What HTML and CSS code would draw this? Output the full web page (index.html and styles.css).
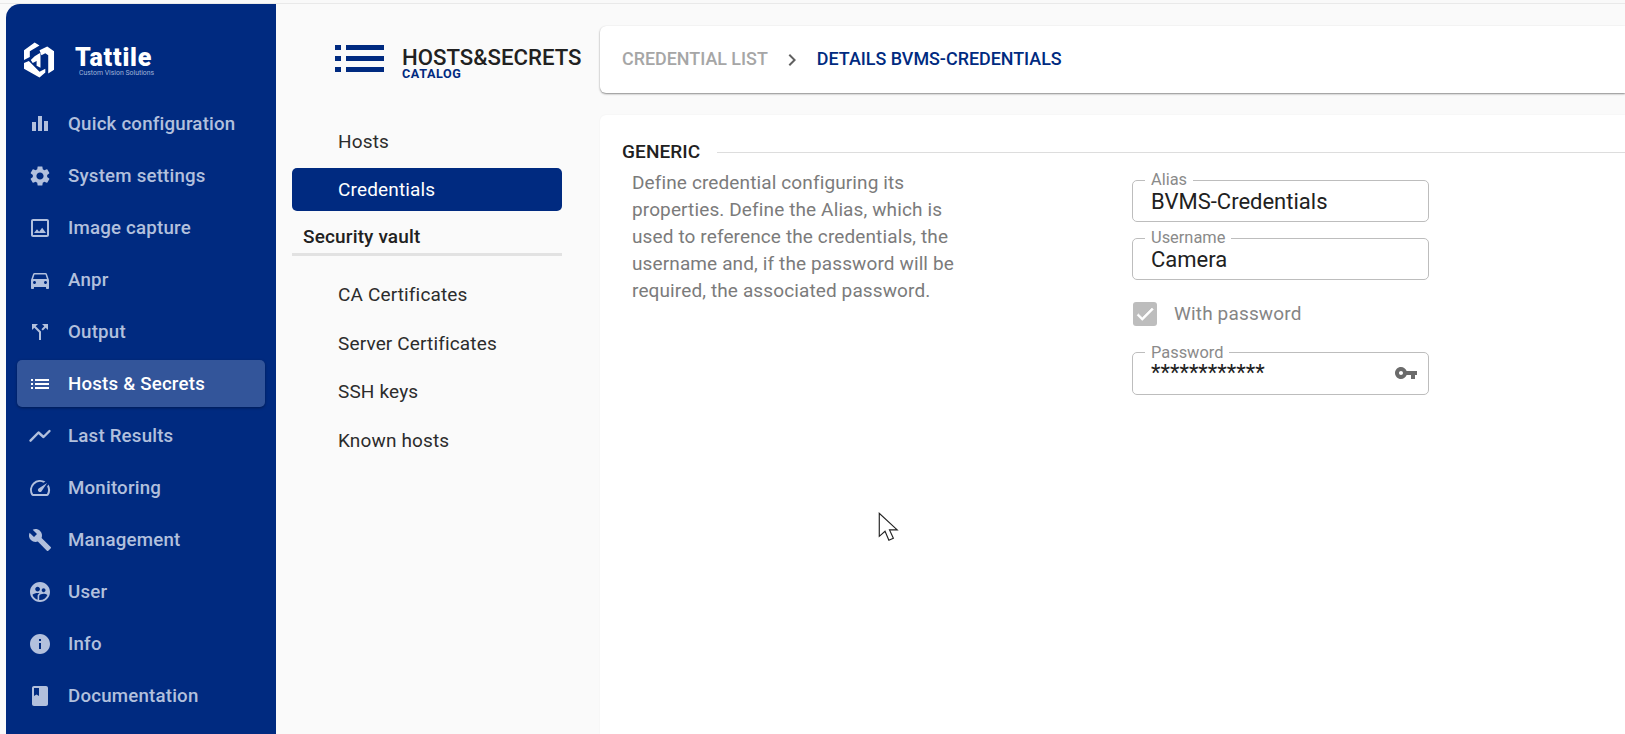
FILE: index.html
```html
<!DOCTYPE html>
<html lang="en">
<head>
<meta charset="utf-8">
<title>Hosts &amp; Secrets</title>
<link rel="stylesheet" href="styles.css">
</head>
<body>
<div class="topstrip"></div>
<div class="app">
  <aside class="sidebar">
    <div class="brand">
      <svg class="brand-mark" viewBox="0 0 32 36"><path d="M11 0 L16 3 L6 9 L6 15 L0 18 L0 8 Z M16 8 L24 4 L31 9 L31 28 L25 32 L25 13 L22 11 L18 13 Z M0 21 L5 19 L16 30 L22 27 L22 31 L16 36 L0 27 Z M11 14 L16 11 L17 11 L17 26 L13 24 L13 19 L9 21 L7 18 Z" fill="#fff"/></svg>
      <div class="brand-text">
        <div class="brand-name">Tattile</div>
        <div class="brand-sub">Custom Vision Solutions</div>
      </div>
    </div>
    <nav class="mainnav">
      <a class="navitem"><svg viewBox="0 0 24 24"><path d="M4 10h4v9H4zM10 4h4v15h-4zM16 9h4v10h-4z"/></svg><span>Quick configuration</span></a>
      <a class="navitem"><svg viewBox="0 0 24 24"><path d="M19.14 12.94c.04-.3.06-.61.06-.94 0-.32-.02-.64-.07-.94l2.03-1.58c.18-.14.23-.41.12-.61l-1.92-3.32c-.12-.22-.37-.29-.59-.22l-2.39.96c-.5-.38-1.03-.7-1.62-.94l-.36-2.54c-.04-.24-.24-.41-.48-.41h-3.84c-.24 0-.43.17-.47.41l-.36 2.54c-.59.24-1.13.57-1.62.94l-2.39-.96c-.22-.08-.47 0-.59.22L2.74 8.87c-.12.21-.08.47.12.61l2.03 1.58c-.05.3-.09.63-.09.94s.02.64.07.94l-2.03 1.58c-.18.14-.23.41-.12.61l1.92 3.32c.12.22.37.29.59.22l2.39-.96c.5.38 1.03.7 1.62.94l.36 2.54c.05.24.24.41.48.41h3.84c.24 0 .44-.17.47-.41l.36-2.54c.59-.24 1.13-.56 1.62-.94l2.39.96c.22.08.47 0 .59-.22l1.92-3.32c.12-.22.07-.47-.12-.61l-2.01-1.58zM12 15.6c-1.98 0-3.6-1.62-3.6-3.6s1.62-3.6 3.6-3.6 3.6 1.62 3.6 3.6-1.62 3.6-3.6 3.6z"/></svg><span>System settings</span></a>
      <a class="navitem"><svg viewBox="0 0 24 24"><path d="M19 5v14H5V5h14m0-2H5c-1.1 0-2 .9-2 2v14c0 1.1.9 2 2 2h14c1.1 0 2-.9 2-2V5c0-1.1-.9-2-2-2zm-4.86 8.86l-3 3.87L9 13.14 6 17h12l-3.86-5.14z"/></svg><span>Image capture</span></a>
      <a class="navitem"><svg viewBox="0 0 24 24"><path d="M18.92 6.01C18.72 5.42 18.16 5 17.5 5h-11c-.66 0-1.21.42-1.42 1.01L3 12v8c0 .55.45 1 1 1h1c.55 0 1-.45 1-1v-1h12v1c0 .55.45 1 1 1h1c.55 0 1-.45 1-1v-8l-2.08-5.99zM6.5 16c-.83 0-1.5-.67-1.5-1.5S5.67 13 6.5 13s1.5.67 1.5 1.5S7.33 16 6.5 16zm11 0c-.83 0-1.5-.67-1.5-1.5s.67-1.5 1.5-1.5 1.5.67 1.5 1.5-.67 1.5-1.5 1.5zM5 11l1.5-4.5h11L19 11H5z"/></svg><span>Anpr</span></a>
      <a class="navitem"><svg viewBox="0 0 24 24"><path d="M14 4l2.29 2.29-2.88 2.88 1.42 1.42 2.88-2.88L20 10V4zm-4 0H4v6l2.29-2.29 4.71 4.7V20h2v-8.41l-5.29-5.3z"/></svg><span>Output</span></a>
      <a class="navitem is-active"><svg viewBox="0 0 24 24"><path d="M3 13h2v-2H3v2zm0 4h2v-2H3v2zm0-8h2V7H3v2zm4 4h14v-2H7v2zm0 4h14v-2H7v2zM7 7v2h14V7H7z"/></svg><span>Hosts &amp; Secrets</span></a>
      <a class="navitem"><svg viewBox="0 0 24 24"><path class="trend" d="M2.5 16.7L10.5 8.5l5 4.5 6-6"/></svg><span>Last Results</span></a>
      <a class="navitem"><svg viewBox="0 0 24 24"><path d="M20.38 8.57l-1.23 1.85a8 8 0 0 1-.22 7.58H5.07A8 8 0 0 1 15.58 6.85l1.85-1.23A10 10 0 0 0 3.35 19a2 2 0 0 0 1.72 1h13.85a2 2 0 0 0 1.74-1 10 10 0 0 0-.27-10.44zm-9.79 6.84a2 2 0 0 0 2.83 0l5.66-8.49-8.49 5.66a2 2 0 0 0 0 2.83z"/></svg><span>Monitoring</span></a>
      <a class="navitem"><svg viewBox="0 0 24 24"><path d="M22.7 19l-9.1-9.1c.9-2.3.4-5-1.5-6.9-2-2-5-2.4-7.4-1.3L9 6 6 9 1.6 4.7C.4 7.1.9 10.1 2.9 12.1c1.9 1.9 4.6 2.4 6.9 1.5l9.1 9.1c.4.4 1 .4 1.4 0l2.3-2.3c.5-.4.5-1.1.1-1.4z"/></svg><span>Management</span></a>
      <a class="navitem"><svg viewBox="0 0 24 24"><path d="M11.99 2c-5.52 0-10 4.48-10 10s4.48 10 10 10 10-4.48 10-10-4.48-10-10-10zm3.61 6.34c1.07 0 1.93.86 1.93 1.93 0 1.07-.86 1.93-1.93 1.93-1.07 0-1.93-.86-1.93-1.93-.01-1.07.86-1.93 1.93-1.93zm-6-1.58c1.3 0 2.36 1.06 2.36 2.36 0 1.3-1.06 2.36-2.36 2.36s-2.36-1.06-2.36-2.36c0-1.31 1.05-2.36 2.36-2.36zm0 9.13v3.75c-2.4-.75-4.3-2.6-5.14-4.96 1.05-1.12 3.67-1.69 5.14-1.69.53 0 1.2.08 1.9.22-1.64.87-1.9 2.02-1.9 2.68zM11.99 20c-.27 0-.53-.01-.79-.04v-4.07c0-1.42 2.94-2.13 4.4-2.13 1.07 0 2.92.39 3.84 1.15-1.17 2.97-4.06 5.09-7.45 5.09z"/></svg><span>User</span></a>
      <a class="navitem"><svg viewBox="0 0 24 24"><path d="M12 2C6.48 2 2 6.48 2 12s4.48 10 10 10 10-4.48 10-10S17.52 2 12 2zm1 15h-2v-6h2v6zm0-8h-2V7h2v2z"/></svg><span>Info</span></a>
      <a class="navitem"><svg viewBox="0 0 24 24"><path d="M18 2H6c-1.1 0-2 .9-2 2v16c0 1.1.9 2 2 2h12c1.1 0 2-.9 2-2V4c0-1.1-.9-2-2-2zM6 4h5v8l-2.5-1.5L6 12V4z"/></svg><span>Documentation</span></a>
    </nav>
  </aside>

  <section class="catalog">
    <header class="catalog-head">
      <svg class="catalog-icon" viewBox="0 0 49 27"><path d="M0 0h6v5H0zM11 0h38v5H11zM0 11h6v5H0zM11 11h38v5H11zM0 22h6v5H0zM11 22h38v5H11z"/></svg>
      <div class="catalog-titles">
        <div class="catalog-title">HOSTS&amp;SECRETS</div>
        <div class="catalog-sub">CATALOG</div>
      </div>
    </header>
    <ul class="sublist">
      <li class="subitem">Hosts</li>
      <li class="subitem is-selected">Credentials</li>
    </ul>
    <div class="subgroup">Security vault</div>
    <ul class="sublist">
      <li class="subitem">CA Certificates</li>
      <li class="subitem">Server Certificates</li>
      <li class="subitem">SSH keys</li>
      <li class="subitem">Known hosts</li>
    </ul>
  </section>

  <main class="content">
    <div class="card crumbs">
      <span class="crumb-muted">CREDENTIAL LIST</span>
      <svg class="crumb-sep" viewBox="0 0 24 24"><path d="M10 6L8.59 7.41 13.17 12l-4.58 4.59L10 18l6-6z"/></svg>
      <span class="crumb-current">DETAILS BVMS-CREDENTIALS</span>
    </div>
    <div class="card panel">
      <div class="section-head"><span>GENERIC</span></div>
      <div class="section-body">
        <p class="desc">Define credential configuring its properties. Define the Alias, which is used to reference the credentials, the username and, if the password will be required, the associated password.</p>
        <form class="form">
          <fieldset class="field"><legend>Alias</legend><div class="value">BVMS-Credentials</div></fieldset>
          <fieldset class="field"><legend>Username</legend><div class="value">Camera</div></fieldset>
          <div class="check">
            <span class="checkbox"><svg viewBox="0 0 24 24"><path d="M9 16.17L4.83 12l-1.42 1.41L9 19 21 7l-1.41-1.41z"/></svg></span>
            <span class="check-label">With password</span>
          </div>
          <fieldset class="field"><legend>Password</legend>
            <div class="value value-pass"><span>************</span><svg viewBox="0 0 24 24"><path d="M12.65 10C11.83 7.67 9.61 6 7 6c-3.31 0-6 2.69-6 6s2.69 6 6 6c2.61 0 4.83-1.67 5.65-4H17v4h4v-4h2v-4H12.65zM7 14c-1.1 0-2-.9-2-2s.9-2 2-2 2 .9 2 2-.9 2-2 2z"/></svg></div>
          </fieldset>
        </form>
      </div>
    </div>
  </main>
</div>
<svg class="cursor" viewBox="0 0 20 26"><path d="M1 1 L1 19 L5.5 15 L8.5 22 L12 20.5 L9 14 L15 14 Z" fill="#fff" stroke="#222" stroke-width=".9" stroke-linejoin="miter"/></svg>
</body>
</html>
```
FILE: styles.css
```css
* { box-sizing: border-box; }
html, body { height: 100%; }
body {
  margin: 0;
  overflow: hidden;
  background: #fafafa;
  font-family: Roboto, "Liberation Sans", sans-serif;
  color: #212121;
  display: flex;
  flex-direction: column;
}
.topstrip { height: 4px; flex: none; border-bottom: 1px solid #e9e9e9; background: #f9f9f9; }
.app { flex: 1; min-height: 0; display: flex; padding-left: 6px; }

.sidebar {
  width: 270px;
  flex: none;
  background: #002a80;
  border-top-left-radius: 14px;
  display: flex;
  flex-direction: column;
}
.brand { display: flex; align-items: flex-start; height: 96px; padding: 38px 0 0 18px; }
.brand-mark { width: 31px; height: 36px; flex: none; }
.brand-text { margin-left: 20px; padding-top: 4px; }
.brand-name { font-size: 25px; font-weight: 900; line-height: 24px; color: #fff; letter-spacing: .8px; }
.brand-sub { font-size: 6.9px; line-height: 8px; color: #9fb2d8; margin-top: -1px; margin-left: 4px; white-space: nowrap; }

.mainnav { display: flex; flex-direction: column; gap: 5.05px; }
.navitem {
  height: 47px;
  margin: 0 11px;
  padding-left: 11px;
  display: flex;
  align-items: center;
  border-radius: 5px;
  color: #b2c0dd;
  font-size: 18.7px;
  font-weight: 500;
  letter-spacing: .2px;
}
.navitem svg { width: 24px; height: 24px; fill: currentColor; flex: none; margin-right: 16px; }
.navitem .trend { fill: none; stroke: currentColor; stroke-width: 2.4; stroke-linecap: round; stroke-linejoin: round; }
.navitem.is-active {
  background: #33559a;
  color: #fff;
  box-shadow: 0 1px 3px rgba(0,0,0,.35);
}

.catalog { width: 324px; flex: none; padding: 0 38px 0 16px; }
.catalog-head { display: flex; align-items: flex-start; height: 115.5px; padding: 40px 0 0 43px; }
.catalog-icon { width: 49px; height: 27px; flex: none; fill: #002a80; margin-top: 1px; }
.catalog-titles { margin-left: 18px; white-space: nowrap; padding-top: 2px; }
.catalog-title { font-size: 22.2px; font-weight: 500; line-height: 22px; color: #212121; }
.catalog-sub { font-size: 12.6px; font-weight: 700; line-height: 12px; letter-spacing: .6px; color: #002a80; }
.sublist { list-style: none; margin: 0; padding: 0; }
.subitem {
  height: 43px;
  margin-bottom: 5.6px;
  padding-left: 46px;
  display: flex;
  align-items: center;
  border-radius: 5px;
  font-size: 19px;
  color: #2c2c2c;
  letter-spacing: .15px;
}
.subitem.is-selected { background: #002a80; color: #fff; margin-bottom: 0; }
.subgroup {
  height: 45px;
  padding: 15px 0 0 11px;
  margin-bottom: 17px;
  border-bottom: 3px solid #e2e2e2;
  font-size: 19px;
  font-weight: 500;
  line-height: 22px;
  color: #212121;
  letter-spacing: .15px;
}

.content { flex: 1; min-width: 0; padding-top: 22px; display: flex; flex-direction: column; gap: 22px; }
.card { background: #fff; border-radius: 6px 0 0 6px; }
.crumbs {
  height: 67px;
  flex: none;
  padding: 0 0 2px 22px;
  display: flex;
  align-items: center;
  font-size: 17.9px;
  font-weight: 500;
  box-shadow: 0 1px 2px rgba(0,0,0,.45), 0 0 1px rgba(0,0,0,.05);
}
.crumb-muted { color: #a6a6a6; }
.crumb-sep { width: 24px; height: 24px; fill: #616161; margin: 2px 13px 0 12px; }
.crumb-current { color: #002a80; }

.panel { flex: 1; border-radius: 6px 0 0 0; padding: 24px 0 0 22px; box-shadow: 0 0 2px rgba(0,0,0,.06); }
.section-head { display: flex; align-items: center; gap: 17px; font-size: 19px; font-weight: 500; line-height: 26px; color: #212121; letter-spacing: .1px; }
.section-head::after { content: ""; flex: 1; height: 1px; background: #ddd; }
.section-body { display: flex; align-items: flex-start; }
.desc {
  width: 340px;
  margin: 0 160px 0 10px;
  padding: 3.5px 0 0 0;
  font-size: 19px;
  line-height: 27.1px;
  color: #7b7b7b;
  letter-spacing: .12px;
}
.form { width: 297px; display: flex; flex-direction: column; gap: 8px; padding-top: 7px; }
.field {
  margin: 0;
  padding: 0 18px;
  height: 50px;
  border: 1px solid #bdbdbd;
  border-radius: 5px;
  min-width: 0;
}
.field legend {
  margin-left: -6px;
  padding: 0 6px;
  font-size: 16.4px;
  line-height: 16px;
  color: #8a8a8a;
}
.value { font-size: 22px; line-height: 26px; margin-top: 1px; color: #212121; }
.check { height: 48.5px; display: flex; align-items: center; padding: 3px 0 0 1px; }
.checkbox { width: 24px; height: 24px; border-radius: 3px; background: #bdbdbd; display: flex; align-items: center; justify-content: center; }
.checkbox svg { width: 22px; height: 22px; fill: #fff; stroke: #fff; stroke-width: .8; }
.check-label { margin-left: 17px; font-size: 19px; color: #858585; letter-spacing: .15px; }
.value-pass { display: flex; justify-content: space-between; align-items: flex-start; margin-top: 0; line-height: 23px; }
.value-pass svg { width: 24px; height: 24px; fill: #6b6b6b; margin: 0 -8px 0 0; flex: none; }

.cursor { position: absolute; left: 878px; top: 512px; width: 25.6px; height: 33.3px; }
```
